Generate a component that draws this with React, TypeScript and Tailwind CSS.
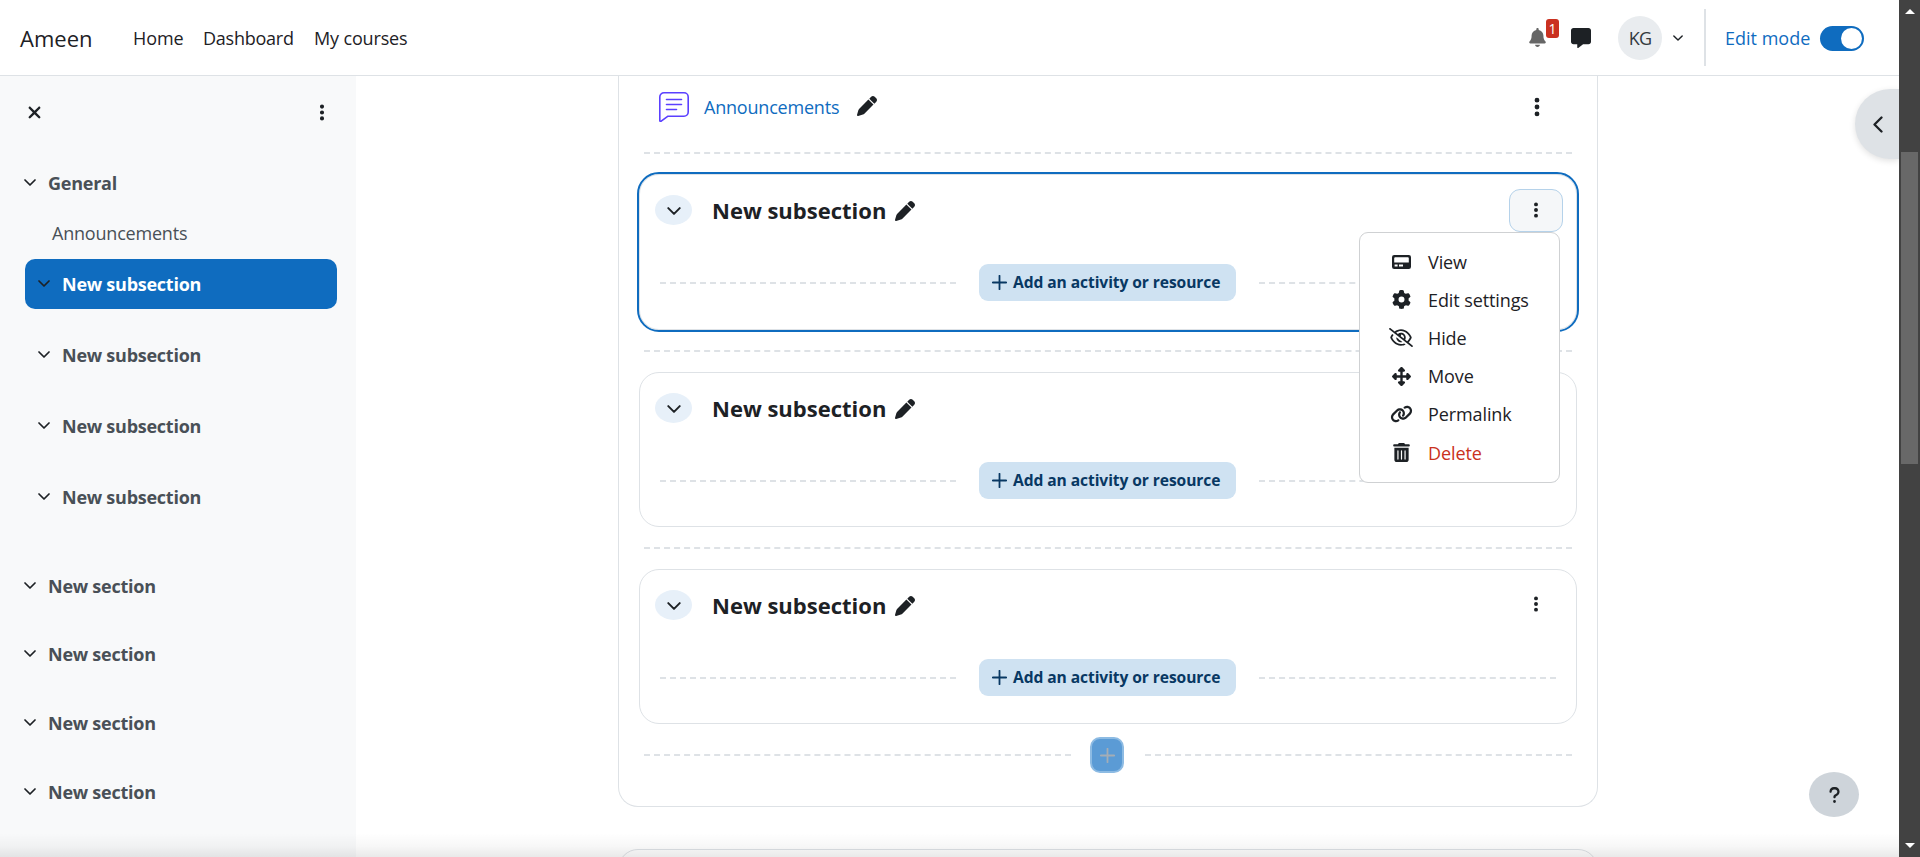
import React from "react";
import {
  FaBell,
  FaMessage,
  FaEllipsisVertical,
  FaPen,
  FaGear,
  FaRegEyeSlash,
  FaUpDownLeftRight,
  FaLink,
  FaTrashCan,
  FaXmark,
  FaQuestion,
} from "react-icons/fa6";

function ChevronDown({ className = "" }: { className?: string }) {
  return (
    <svg viewBox="0 0 12 7" fill="none" stroke="#1d2125" strokeWidth="1.7" strokeLinecap="round" strokeLinejoin="round" className={className}>
      <path d="M1 1l5 5 5-5" />
    </svg>
  );
}

function Plus({ className = "" }: { className?: string }) {
  return (
    <svg viewBox="0 0 15 15" fill="none" stroke="currentColor" strokeWidth="1.8" strokeLinecap="round" className={className}>
      <path d="M7.5 0.8v13.4M0.8 7.5h13.4" />
    </svg>
  );
}

function Dashes({ className = "" }: { className?: string }) {
  return <div className={`h-0 shrink-0 border-t-2 border-dashed border-[#dee2e6] ${className}`} />;
}

function Header() {
  return (
    <header className="flex h-[76px] shrink-0 items-center border-b border-[#dee2e6] bg-white pl-5">
      <a className="w-[113px] pt-px text-[22px] leading-8">Ameen</a>
      <nav className="flex text-lg tracking-[-0.1px]">
        <a className="w-[70px]">Home</a>
        <a className="w-[111px] tracking-[-0.25px]">Dashboard</a>
        <a className="tracking-[-0.15px]">My courses</a>
      </nav>
      <div className="ml-auto flex items-center pr-[35px]">
        <div className="relative mr-[26px] h-[19px] w-4">
          <FaBell className="h-[19px] w-[17px] text-[#666]" />
          <span className="absolute -top-[9px] left-[17px] flex h-[19px] w-[13px] items-center justify-center rounded-[3px] bg-[#ca3120] text-[14px] leading-none text-white">
            1
          </span>
        </div>
        <FaMessage className="mr-[27px] h-5 w-5" />
        <div className="flex h-11 w-11 items-center justify-center rounded-full bg-[#e9ecef] pt-px text-lg tracking-[-0.8px] text-[#343a40]">
          KG
        </div>
        <ChevronDown className="mr-[21px] ml-[11px] h-[6px] w-[10px]" />
        <div className="mr-[19px] h-[57px] w-[2px] bg-[#dee2e6]" />
        <span className="mr-[10px] w-[85px] text-lg whitespace-nowrap text-[#0f6cbf]">Edit mode</span>
        <div className="mt-[2px] flex h-[25px] w-11 items-center justify-end rounded-full bg-[#0f6cbf] pr-[2px]">
          <div className="h-[21px] w-[21px] rounded-full bg-white" />
        </div>
      </div>
    </header>
  );
}

function IndexItem({ label, sub, active, className = "" }: { label: string; sub?: boolean; active?: boolean; className?: string }) {
  return (
    <div
      className={`flex h-[50px] shrink-0 items-center rounded-[10px] font-bold tracking-[-0.25px] ${sub ? "pl-[13px]" : "-ml-px"} ${active ? "bg-[#0f6cbf] text-white" : "text-[#495057]"} ${className}`}
    >
      <ChevronDown className="-mt-px mr-[12px] h-[7px] w-3" />
      <span>{label}</span>
    </div>
  );
}

function Sidebar() {
  return (
    <aside className="flex w-[356px] shrink-0 flex-col bg-[#f8f9fa] pr-[19px] pl-[25px] text-lg">
      <div className="flex h-[82px] shrink-0 items-center justify-between pt-0 pr-[6px] pb-[10px]">
        <FaXmark className="h-[19px] w-[19px]" />
        <FaEllipsisVertical className="h-[19px] w-[18px]" />
      </div>
      <IndexItem label="General" />
      <div className="flex h-[51px] shrink-0 items-center pb-[2px] pl-[27px] tracking-[-0.2px] text-[#495057]">Announcements</div>
      <IndexItem label="New subsection" sub active />
      <IndexItem label="New subsection" sub className="mt-[21px]" />
      <IndexItem label="New subsection" sub className="mt-[21px]" />
      <IndexItem label="New subsection" sub className="mt-[21px]" />
      <IndexItem label="New section" className="mt-[39px]" />
      <IndexItem label="New section" className="mt-[18px]" />
      <IndexItem label="New section" className="mt-[19px]" />
      <IndexItem label="New section" className="mt-[19px]" />
    </aside>
  );
}

function ViewIcon() {
  return (
    <svg viewBox="0 0 19 14" className="h-[14px] w-[19px]">
      <rect width="19" height="14" rx="2.2" fill="#1d2125" />
      <path d="M2.2 3.2a1 1 0 0 1 1-1h12.6a1 1 0 0 1 1 1v4.4H2.2zM2.6 9.6h3v1.8h-3zM7 9.6h4v1.8H7z" fill="#fff" />
    </svg>
  );
}

const menuItems = [
  { label: "View", icon: <ViewIcon /> },
  { label: "Edit settings", icon: <FaGear className="h-[19px] w-[19px]" /> },
  { label: "Hide", icon: <FaRegEyeSlash className="h-[19px] w-[24px]" /> },
  { label: "Move", icon: <FaUpDownLeftRight className="h-[19px] w-[19px]" /> },
  { label: "Permalink", icon: <FaLink className="h-[18px] w-[23px]" /> },
  { label: "Delete", icon: <FaTrashCan className="h-[19px] w-[17px]" />, danger: true },
];

function ActionMenu() {
  return (
    <div className="absolute top-[42px] right-[2px] z-10 flex h-[251px] w-[201px] flex-col rounded-[9px] border border-[#cfd1d3] bg-white pt-[10px] text-lg">
      {menuItems.map((m) => (
        <div key={m.label} className="flex h-[38.2px] items-center">
          <span className="ml-[29px] flex w-6 justify-center">{m.icon}</span>
          <span className={`ml-[15px] tracking-[-0.1px] whitespace-nowrap ${m.danger ? "text-[#ca3120]" : ""}`}>{m.label}</span>
        </div>
      ))}
    </div>
  );
}

function Subsection({ selected, className = "" }: { selected?: boolean; className?: string }) {
  return (
    <section
      className={`mx-5 flex shrink-0 flex-col rounded-[20px] border border-[#dee2e6] ${selected ? "h-[156px] outline-2 outline-[#0f6cbf]" : "h-[155px]"} ${className}`}
    >
      <div className="flex h-[70px] shrink-0 items-center pr-[13px] pl-[15px]">
        <div className="flex h-[30px] w-[37px] items-center justify-center rounded-[50%] bg-[#e7f0f9]">
          <ChevronDown className="mt-[2px] h-2 w-[14px]" />
        </div>
        <h3 className="ml-5 w-[174px] text-[22px] font-bold whitespace-nowrap">New subsection</h3>
        <FaPen className="mt-[2px] ml-[9px] h-5 w-5" />
        {selected ? (
          <div className="relative ml-auto flex h-[43px] w-[54px] items-center justify-center rounded-[11px] border border-[#b5d2ea] bg-[#f5f7f9]">
            <FaEllipsisVertical className="h-[18px] w-[18px]" />
            <ActionMenu />
          </div>
        ) : (
          <div className="-mt-[2px] ml-auto flex w-[54px] justify-center">
            <FaEllipsisVertical className="h-[18px] w-[18px]" />
          </div>
        )}
      </div>
      <div className="mt-[19px] flex items-center px-5">
        <Dashes className="w-[296px]" />
        <button className="ml-[23px] flex h-[37px] w-[258px] items-center rounded-[9px] bg-[#cfe2f2] pl-[13px] text-[15.6px] font-bold whitespace-nowrap text-[#083863]">
          <Plus className="mr-[6px] h-[15px] w-[15px]" />
          <span className="pt-px tracking-[-0.08px]">Add an activity or resource</span>
        </button>
        <Dashes className="ml-[23px] w-[297px]" />
      </div>
    </section>
  );
}

function AnnouncementsIcon() {
  return (
    <svg viewBox="0 0 30 30" fill="none" stroke="#5b40ff" strokeWidth="1.6" strokeLinecap="round" strokeLinejoin="round" className="h-[30px] w-[30px]">
      <path d="M5 .8h20a4.2 4.2 0 0 1 4.2 4.2v15a4.2 4.2 0 0 1-4.2 4.2H9l-6.800 5c-.7.4-1.400 0-1.400-.8V5A4.200 4.200 0 0 1 5 .8z" />
      <path d="M7.500 7.500h15M7.500 12.500h15M7.500 17.500h10" />
    </svg>
  );
}

function CourseContent() {
  return (
    <main className="flex flex-1 flex-col overflow-hidden pl-[262px]">
      <div className="flex h-[731px] w-[980px] shrink-0 flex-col rounded-b-[20px] border border-t-0 border-[#dee2e6]">
        <div className="flex h-[76px] shrink-0 items-start pt-4 pl-10">
          <AnnouncementsIcon />
          <a className="ml-[15px] w-[136px] pt-[1px] text-lg tracking-[-0.2px] text-[#0f6cbf]">Announcements</a>
          <FaPen className="mt-[4px] ml-[17px] h-5 w-5" />
          <FaEllipsisVertical className="mt-1 mr-[49px] ml-auto h-[22px] w-[22px]" />
        </div>
        <Dashes className="ml-[25px] w-[928px]" />
        <Subsection selected className="mt-5" />
        <Dashes className="mt-5 ml-[25px] w-[928px]" />
        <Subsection className="mt-5" />
        <Dashes className="mt-5 ml-[25px] w-[928px]" />
        <Subsection className="mt-5" />
        <div className="mt-[13px] flex items-center pl-[25px]">
          <Dashes className="w-[427px]" />
          <div className="ml-[19px] flex h-9 w-[34px] items-center justify-center rounded-[10px] border-2 border-[#8dbbe3] bg-[#5b9bd5] text-[#a4adb6]">
            <Plus className="h-[15px] w-[15px]" />
          </div>
          <Dashes className="ml-[21px] w-[427px]" />
        </div>
      </div>
      <div className="mt-[42px] h-16 w-[980px] shrink-0 rounded-[20px] border border-[#dee2e6]" />
    </main>
  );
}

function Scrollbar() {
  return (
    <div className="flex h-full w-[21px] shrink-0 flex-col items-center bg-[#424242]">
      <svg viewBox="0 0 10 5" className="mt-[9px] h-[5px] w-[10px] shrink-0">
        <path d="M5 0l5 5H0z" fill="#fff" />
      </svg>
      <div className="mt-[138px] h-[312px] w-[17px] bg-[#686868]" />
      <svg viewBox="0 0 10 5" className="mt-auto mb-[9px] h-[5px] w-[10px] shrink-0">
        <path d="M5 5l5-5H0z" fill="#fff" />
      </svg>
    </div>
  );
}

export default function App() {
  return (
    <div className="flex h-[857px] w-[1920px] overflow-hidden bg-white font-['Open_Sans','Noto_Sans',sans-serif] text-[#1d2125]">
      <div className="relative flex h-full flex-1 flex-col overflow-hidden">
        <Header />
        <div className="flex min-h-0 flex-1">
          <Sidebar />
          <CourseContent />
        </div>
        <button className="absolute top-[89px] right-0 flex h-[70px] w-11 items-center rounded-l-full bg-[#dee2e6] pl-[18px] shadow-[0_2px_6px_rgba(0,0,0,0.12)]">
          <svg viewBox="0 0 10 17" fill="none" stroke="#1d2125" strokeWidth="2.300" strokeLinecap="round" strokeLinejoin="round" className="h-[17px] w-[10px]">
            <path d="M8.500 1.500l-7 7 7 7" />
          </svg>
        </button>
        <button className="absolute right-10 bottom-10 flex h-[45px] w-[50px] items-center justify-center rounded-[50%] bg-[#ced4da]">
          <FaQuestion className="h-[18px] w-[13px]" />
        </button>
        <div className="absolute inset-x-0 bottom-0 h-6 bg-[linear-gradient(to_top,rgba(0,0,0,0.085),rgba(0,0,0,0.03)_45%,transparent)]" />
      </div>
      <Scrollbar />
    </div>
  );
}
